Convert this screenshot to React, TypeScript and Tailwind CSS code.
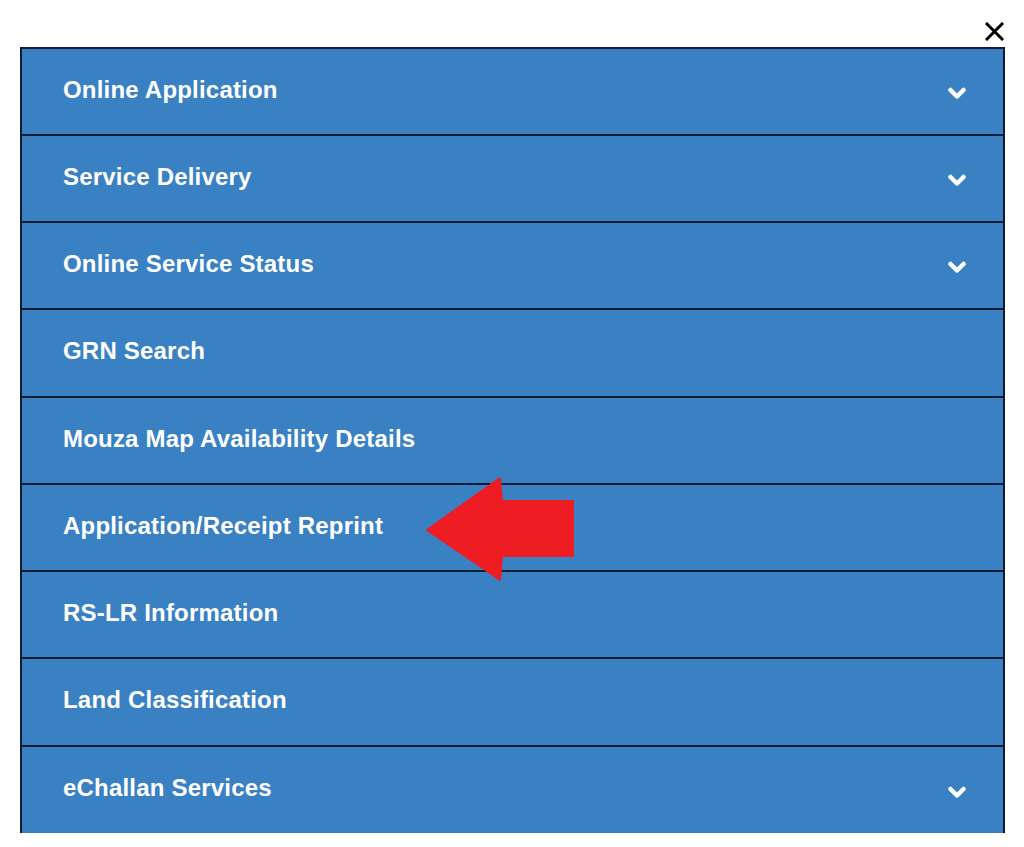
const items = [
  { label: "Online Application", caret: true, h: "h-[87px]" },
  { label: "Service Delivery", caret: true, h: "h-[87px]" },
  { label: "Online Service Status", caret: true, h: "h-[87px]" },
  { label: "GRN Search", caret: false, h: "h-[88px]" },
  { label: "Mouza Map Availability Details", caret: false, h: "h-[87px]" },
  { label: "Application/Receipt Reprint", caret: false, h: "h-[87px]" },
  { label: "RS-LR Information", caret: false, h: "h-[87px]" },
  { label: "Land Classification", caret: false, h: "h-[88px]" },
  { label: "eChallan Services", caret: true, h: "h-[88px]" },
]

const Chevron = () => (
  <svg width="18" height="14" viewBox="0 0 18 14" className="shrink-0 mt-[5px]">
    <path d="M2.5 3 L9 9.5 L15.5 3" fill="none" stroke="#fff" strokeWidth="4.5" strokeLinecap="round" strokeLinejoin="round" />
  </svg>
)

export default function App() {
  return (
    <div className="relative w-[1024px] h-[847px] bg-white font-['Liberation_Sans',Arial,sans-serif]">
      {/* close */}
      <div className="flex justify-end pr-[20px] pt-[22px] h-[47px]">
        <svg width="19" height="19" viewBox="0 0 19 19">
          <path d="M2 2 L17 17 M17 2 L2 17" stroke="#000" strokeWidth="3" strokeLinecap="square" />
        </svg>
      </div>

      {/* menu */}
      <div className="ml-[20px] w-[985px] border-x-2 border-[#0e1d36] bg-[#3a81c3]">
        {items.map((item) => (
          <div
            key={item.label}
            className={`${item.h} flex items-center justify-between border-t-2 border-[#0e1d36] pl-[41px] pr-[37px]`}>
            <span className="text-white text-[24px] font-bold tracking-[0.2px] mb-[4px]">{item.label}</span>
            {item.caret && <Chevron />}
          </div>
        ))}
      </div>

      {/* red arrow */}
      <svg className="absolute left-[425px] top-[476px]" width="152" height="108" viewBox="425 476 152 108">
        <polygon
          points="427,530 500,478 502,501 573,501 573,556 502,556 500,580"
          fill="#ee1d24"
          stroke="#ee1d24"
          strokeWidth="2"
          strokeLinejoin="round"
        />
      </svg>
    </div>
  )
}
